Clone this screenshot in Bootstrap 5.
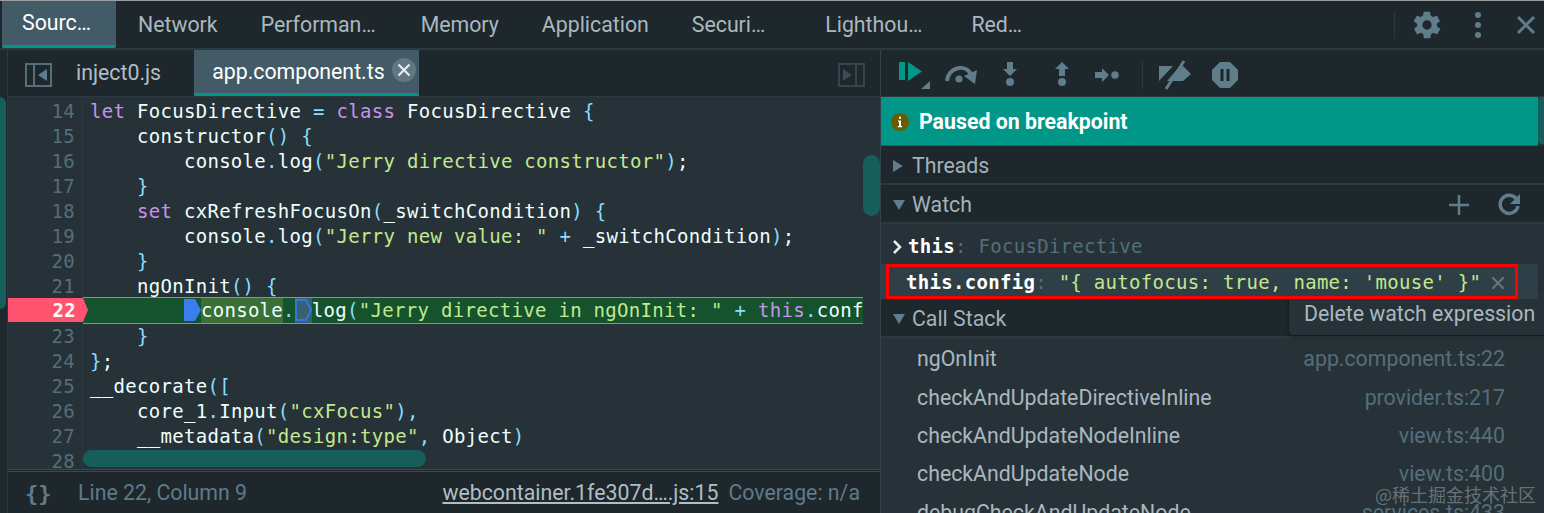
<!DOCTYPE html>
<html lang="en">
<head>
<meta charset="utf-8">
<title>DevTools</title>
<link rel="stylesheet" href="https://cdn.jsdelivr.net/npm/bootstrap@5.3.0/dist/css/bootstrap.min.css">
<style>
html,body{height:513px;overflow:hidden;background:#1e272c;}
body{font-family:Roboto,"Liberation Sans",sans-serif;font-size:21.3px;color:#b0bec5;position:relative;}
svg{display:block;flex:none;}
.topbar{height:50px;background:#1e272c;border-top:1px solid #9a9ea0;border-bottom:2px solid #2c393f;padding-left:2px;}
.ttab{height:47px;line-height:48px;padding:0 22px;color:#a9b8bf;white-space:nowrap;}
.ttab.on{background:#425b67;color:#fff;border-bottom:3px solid #009688;width:114px;padding:0 0 0 20px;line-height:44px;border-radius:0 0 2px 2px;}
.ttab.perf{margin:0 1px 0 -1px;}
.ttab.appl,.ttab.secu{margin-left:-1px;}
.ttab.secu{margin-right:16px;}
.ttab.mid{margin-right:5px;}
.topicons{margin-left:auto;height:47px;}
.vsep{width:1px;height:28px;background:#2c393f;}
.strip{width:8px;background:#1e272c;border-right:1px solid #2c393f;position:relative;}
.strip i{position:absolute;left:0;top:47px;width:6px;height:212px;background:#155e5a;border-radius:0 6px 6px 0;}
.main{height:463px;}
.leftp{width:873px;background:#263238;border-right:1px solid #33424a;position:relative;overflow:hidden;}
.leftp>*,.rightp>*{flex:none;}
.filetabs{height:47px;background:#1e272c;border-bottom:1px solid #2c393f;}
.ftab{width:225px;height:46px;background:#425b67;border-bottom:3px solid #009688;color:#fff;padding-left:18px;line-height:42px;margin-left:33px;}
.xbtn{width:24px;height:24px;border-radius:50%;background:#5f7783;margin-left:auto;margin-right:3px;margin-top:-3px;}
.inj{margin-left:24px;color:#b0bec5;}
.code{height:372px;overflow:hidden;font-family:"DejaVu Sans Mono","Liberation Mono",monospace;font-size:19px;letter-spacing:.3px;line-height:25px;padding-top:2px;color:#eef;}
.cline{height:25px;white-space:pre;position:relative;}
.gut{width:75px;padding-right:7px;text-align:right;color:#546e7a;border-right:1px solid #2c393f;flex:none;}
.txt{padding-left:7px;width:780px;overflow:hidden;color:#eeffff;}
.kw{color:#c792ea}.op{color:#89ddff}.st{color:#c3e88d}
.hot{background:#14532d;border-top:1px solid #4fb86a;border-bottom:1px solid #4fb86a;height:27px;margin-top:-2px;line-height:25px;}
.hotrow{height:25px;}
.hotgut{width:80px;margin-right:-5px;height:24px;margin-top:-1px;background:#ff5370;color:#fff;text-align:right;padding-right:12px;font-weight:700;position:relative;z-index:1;flex:none;clip-path:polygon(0 0,75px 0,80px 50%,75px 100%,0 100%);line-height:25px;}
.mk1,.mk2{display:inline-block;width:17px;height:25px;vertical-align:top;}
.bsel{background:#3a7035;display:inline-block;}
.mk2{background:#3a6070;}
.hbar{position:absolute;left:75px;top:400px;width:343px;height:17px;border-radius:9px;background:#155e5a;}
.vbar{position:absolute;left:855px;top:105px;width:17px;height:61px;border-radius:9px;background:#155e5a;}
.statusb{height:44px;background:#1e272c;border-top:3px double #3a4a52;color:#5f7b8a;padding-left:17px;padding-top:1px;white-space:nowrap;}
.brace{font-family:"DejaVu Sans Mono",monospace;font-weight:700;font-size:22px;width:28px;color:#5f7b8a;letter-spacing:0;}
.src{color:#b0bec5;text-decoration:underline;}
.rightp{width:663px;position:relative;overflow:hidden;background:#263238;}
.dbar{height:47px;background:#1e272c;border-bottom:1px solid #2c393f;padding-left:17px;padding-top:3px;}
.banner{height:49px;width:657px;background:#009688;color:#fff;font-weight:700;padding-left:10px;padding-top:2px;border-bottom:1px solid #0b6f66;}
.rscroll{position:absolute;right:0;top:47px;width:6px;height:47px;background:#155e5a;border-radius:4px 0 0 4px;}
.shead{height:39px;background:#1e272c;border-bottom:2px solid #2c393f;padding-left:12px;padding-top:3px;color:#a3b2b9;}
.shead span{margin-left:9px;}
.wrow{font-family:"DejaVu Sans Mono",monospace;font-size:19px;letter-spacing:.3px;white-space:pre;}
.wthis{height:40px;padding-left:12px;color:#546e7a;padding-top:5px;}
.wthis b,.wcfg b{color:#fff;font-weight:700;letter-spacing:.3px;}
.cfgband{height:35px;width:657px;background:#2f3f47;padding-left:5px;position:relative;z-index:2;}
.wcfg{height:35px;width:632px;border:3px solid #f00;padding-left:17px;padding-top:2px;color:#546e7a;box-sizing:border-box;}
.stackh{height:39px;}
.crow{height:38.4px;padding:4px 39px 0 36px;white-space:nowrap;color:#a9b8bf;}
.crow em{font-style:normal;color:#546e7a;margin-left:auto;}
.tipbox{position:absolute;left:408px;top:240px;width:260px;height:45px;background:#263238;border-radius:4px;box-shadow:0 1px 5px rgba(0,0,0,.45);padding-left:15px;padding-top:1px;line-height:45px;color:#a9b8bf;white-space:nowrap;}
.wmark{position:absolute;right:8px;top:483px;font-family:"Noto Sans CJK SC",sans-serif;font-size:18px;line-height:22px;color:rgba(160,170,175,.55);white-space:nowrap;}
</style>
</head>
<body>
<div class="topbar d-flex align-items-start">
  <div class="ttab on">Sourc…</div>
  <div class="ttab">Network</div>
  <div class="ttab perf">Performan…</div>
  <div class="ttab">Memory</div>
  <div class="ttab appl">Application</div>
  <div class="ttab secu">Securi…</div>
  <div class="ttab mid">Lighthou…</div>
  <div class="ttab">Red…</div>
  <div class="topicons d-flex align-items-center">
    <div class="vsep"></div>
    <svg class="ms-3" width="32" height="32" viewBox="0 0 24 24" fill="#607d8b"><path d="M19.4 13a7.5 7.5 0 0 0 0-2l2.1-1.6a.5.5 0 0 0 .1-.6l-2-3.5a.5.5 0 0 0-.6-.2l-2.5 1a7.400 7.400 0 0 0-1.700-1l-.4-2.600a.5.5 0 0 0-.5-.4h-4a.5.5 0 0 0-.5.4l-.4 2.600a7.400 7.400 0 0 0-1.700 1l-2.500-1a.5.5 0 0 0-.6.2l-2 3.500a.5.5 0 0 0 .1.6L4.600 11a7.500 7.500 0 0 0 0 2l-2.100 1.600a.5.5 0 0 0-.1.6l2 3.500a.5.5 0 0 0 .6.2l2.500-1a7.400 7.400 0 0 0 1.700 1l.4 2.600a.5.5 0 0 0 .5.4h4a.5.5 0 0 0 .5-.4l.4-2.600a7.400 7.400 0 0 0 1.700-1l2.500 1a.5.5 0 0 0 .6-.2l2-3.500a.5.5 0 0 0-.1-.6zM12 15.500a3.500 3.500 0 1 1 0-7 3.500 3.500 0 0 1 0 7z"/></svg>
    <svg style="margin-left:30px" width="10" height="28" viewBox="0 0 10 28" fill="#607d8b"><circle cx="5" cy="4" r="3"/><circle cx="5" cy="14" r="3"/><circle cx="5" cy="24" r="3"/></svg>
    <svg style="margin-left:33px;margin-right:8px" width="20" height="20" viewBox="0 0 20 20" stroke="#607d8b" stroke-width="3"><path d="M2 2l16 16M18 2L2 18"/></svg>
  </div>
</div>
<div class="main d-flex">
  <div class="strip"><i></i></div>
  <div class="leftp d-flex flex-column">
    <div class="filetabs d-flex align-items-start">
      <svg style="margin:13px 0 0 17px" width="27" height="24" viewBox="0 0 27 24" fill="none" stroke="#546e7a" stroke-width="2"><rect x="1" y="1" width="25" height="22"/><path d="M9 1v22"/><path d="M22 6v12l-9-6z" fill="#607d8b" stroke="none"/></svg>
      <div class="inj" style="line-height:46px">inject0.js</div>
      <div class="ftab d-flex align-items-center">app.component.ts
        <div class="xbtn d-flex align-items-center justify-content-center"><svg width="14" height="14" viewBox="0 0 14 14" stroke="#e3e9ec" stroke-width="2.2"><path d="M1.500 1.500l11 11M12.500 1.500l-11 11"/></svg></div>
      </div>
      <svg style="margin:13px 0 0 auto;margin-right:15px" width="27" height="24" viewBox="0 0 27 24" fill="none" stroke="#34454e" stroke-width="2"><rect x="1" y="1" width="25" height="22"/><path d="M18 1v22"/><path d="M5 6v12l9-6z" fill="#3a4c55" stroke="none"/></svg>
    </div>
    <div class="code">
      <div class="cline d-flex"><div class="gut">14</div><div class="txt"><span class="kw">let</span> FocusDirective <span class="op">=</span> <span class="kw">class</span> FocusDirective <span class="op">{</span></div></div>
      <div class="cline d-flex"><div class="gut">15</div><div class="txt">    constructor<span class="op">() {</span></div></div>
      <div class="cline d-flex"><div class="gut">16</div><div class="txt">        console<span class="op">.</span>log<span class="op">(</span><span class="st">"Jerry directive constructor"</span><span class="op">)</span>;</div></div>
      <div class="cline d-flex"><div class="gut">17</div><div class="txt">    <span class="op">}</span></div></div>
      <div class="cline d-flex"><div class="gut">18</div><div class="txt">    <span class="kw">set</span> cxRefreshFocusOn<span class="op">(</span>_switchCondition<span class="op">) {</span></div></div>
      <div class="cline d-flex"><div class="gut">19</div><div class="txt">        console<span class="op">.</span>log<span class="op">(</span><span class="st">"Jerry new value: "</span> <span class="op">+</span> _switchCondition<span class="op">)</span>;</div></div>
      <div class="cline d-flex"><div class="gut">20</div><div class="txt">    <span class="op">}</span></div></div>
      <div class="cline d-flex"><div class="gut">21</div><div class="txt">    ngOnInit<span class="op">() {</span></div></div>
      <div class="cline hotrow d-flex"><div class="hotgut">22</div><div class="txt hot">        <svg class="mk1 d-inline-block" viewBox="0 0 17 25"><path d="M0 1h11l6 11-6 11H0z" fill="#3b7cf0"/></svg><span class="bsel">console</span><span class="op">.</span><svg class="mk2 d-inline-block" viewBox="0 0 17 25"><path d="M1 2h10l5 10-5 10H1z" fill="none" stroke="#2f78e0" stroke-width="2"/></svg>log<span class="op">(</span><span class="st">"Jerry directive in ngOnInit: "</span> <span class="op">+</span> <span class="kw">this</span><span class="op">.</span>config<span class="op">)</span>;</div></div>
      <div class="cline d-flex"><div class="gut">23</div><div class="txt">    <span class="op">}</span></div></div>
      <div class="cline d-flex"><div class="gut">24</div><div class="txt"><span class="op">}</span>;</div></div>
      <div class="cline d-flex"><div class="gut">25</div><div class="txt">__decorate<span class="op">([</span></div></div>
      <div class="cline d-flex"><div class="gut">26</div><div class="txt">    core_1<span class="op">.</span>Input<span class="op">(</span><span class="st">"cxFocus"</span><span class="op">),</span></div></div>
      <div class="cline d-flex"><div class="gut">27</div><div class="txt">    __metadata<span class="op">(</span><span class="st">"design:type"</span><span class="op">,</span> Object<span class="op">)</span></div></div>
      <div class="cline d-flex"><div class="gut">28</div><div class="txt"></div></div>
    </div>
    <div class="hbar"></div>
    <div class="vbar"></div>
    <div class="statusb d-flex align-items-center">
      <div class="brace">{}</div>
      <div style="margin-left:25px">Line 22, Column 9</div>
      <div class="src" style="margin-left:auto">webcontainer.1fe307d….js:15</div>
      <div style="margin:0 20px 0 10px">Coverage: n/a</div>
    </div>
  </div>
  <div class="rightp d-flex flex-column">
    <div class="dbar d-flex align-items-center">
      <svg width="34" height="30" viewBox="0 0 34 30"><path d="M1 2h6v18H1zM10 2l14 9.500L10 21z" fill="#009688"/><path d="M32 21v8h-9z" fill="#607d8b"/></svg>
      <svg style="margin-left:12px" width="34" height="22" viewBox="0 0 34 22" fill="none"><path d="M3 17C4 4 20 -1 27 10" stroke="#607d8b" stroke-width="4"/><path d="M20 12L33 6l-2 14z" fill="#607d8b"/><circle cx="15" cy="15" r="3.600" fill="#607d8b"/></svg>
      <svg style="margin-left:24px" width="16" height="26" viewBox="0 0 16 26" fill="#607d8b"><path d="M5 0h6v7h4l-7 7-7-7h4z"/><circle cx="8" cy="20" r="4"/></svg>
      <svg style="margin-left:36px" width="16" height="26" viewBox="0 0 16 26" fill="#607d8b"><path d="M8 0l7 7h-4v7H5V7H1z"/><circle cx="8" cy="20" r="4"/></svg>
      <svg style="margin-left:25px" width="24" height="16" viewBox="0 0 24 16" fill="#607d8b"><path d="M0 5h7V1l7 7-7 7v-4H0z"/><circle cx="20" cy="8" r="3.800"/></svg>
      <div class="vsep" style="margin-left:23px"></div>
      <svg style="margin-left:15px" width="34" height="32" viewBox="0 0 34 32" fill="#607d8b"><path d="M1 7h14l-14 15zM9 22l13-15h3l8 8-8 7z"/><path d="M8 30L26 2" stroke="#607d8b" stroke-width="3" fill="none"/></svg>
      <svg style="margin-left:20px" width="26" height="26" viewBox="0 0 26 26"><path d="M8 0h10l8 8v10l-8 8H8l-8-8V8z" fill="#607d8b"/><path d="M8.500 7h3v12h-3zM14.500 7h3v12h-3z" fill="#1e272c"/></svg>
    </div>
    <div class="banner d-flex align-items-center">
      <svg width="18" height="18" viewBox="0 0 18 18"><circle cx="9" cy="9" r="9" fill="#6b5b00"/><path d="M7 7.500h3V13h1.200v1.200H6.800V13H8V8.700H7zM8 3.800h2v2H8z" fill="#fff"/></svg>
      <span style="margin-left:10px">Paused on breakpoint</span>
    </div>
    <div class="rscroll"></div>
    <div class="shead d-flex align-items-center"><svg width="10" height="12" viewBox="0 0 10 12" fill="#607d8b"><path d="M0 0l10 6-10 6z"/></svg><span>Threads</span></div>
    <div class="shead d-flex align-items-center"><svg width="12" height="10" viewBox="0 0 12 10" fill="#607d8b"><path d="M0 0h12L6 10z"/></svg><span style="margin-left:7px">Watch</span>
      <svg class="ms-auto" width="20" height="20" viewBox="0 0 20 20" stroke="#607d8b" stroke-width="2.500"><path d="M10 0v20M0 10h20"/></svg>
      <svg style="margin:0 23px 0 28px" width="24" height="24" viewBox="0 0 24 24" fill="none"><path d="M19 5.500A9 9 0 1 0 21 13" stroke="#607d8b" stroke-width="3.500"/><path d="M23 1v10H13z" fill="#607d8b"/></svg>
    </div>
    <div class="wrow wthis d-flex align-items-center"><svg style="margin-right:6px" width="9" height="14" viewBox="0 0 9 14" fill="none" stroke="#e8eef0" stroke-width="2.500"><path d="M1 1l6 6-6 6"/></svg><span><b>this</b>: FocusDirective</span></div>
    <div class="cfgband"><div class="wrow wcfg d-flex align-items-center"><span><b>this.config</b>: <span class="st">"{ autofocus: true, name: 'mouse' }"</span></span><svg style="margin-left:11px" width="12" height="12" viewBox="0 0 12 12" stroke="#68767c" stroke-width="2"><path d="M0 0l12 12M12 0L0 12"/></svg></div></div>
    <div class="shead stackh d-flex align-items-center"><svg width="12" height="10" viewBox="0 0 12 10" fill="#607d8b"><path d="M0 0h12L6 10z"/></svg><span style="margin-left:7px">Call Stack</span></div>
    <div class="crow d-flex align-items-center">ngOnInit<em>app.component.ts:22</em></div>
    <div class="crow d-flex align-items-center">checkAndUpdateDirectiveInline<em>provider.ts:217</em></div>
    <div class="crow d-flex align-items-center">checkAndUpdateNodeInline<em>view.ts:440</em></div>
    <div class="crow d-flex align-items-center">checkAndUpdateNode<em>view.ts:400</em></div>
    <div class="crow d-flex align-items-center">debugCheckAndUpdateNode<em>services.ts:433</em></div>
    <div class="tipbox">Delete watch expression</div>
  </div>
</div>
<div class="wmark">@稀土掘金技术社区</div>
</body>
</html>
